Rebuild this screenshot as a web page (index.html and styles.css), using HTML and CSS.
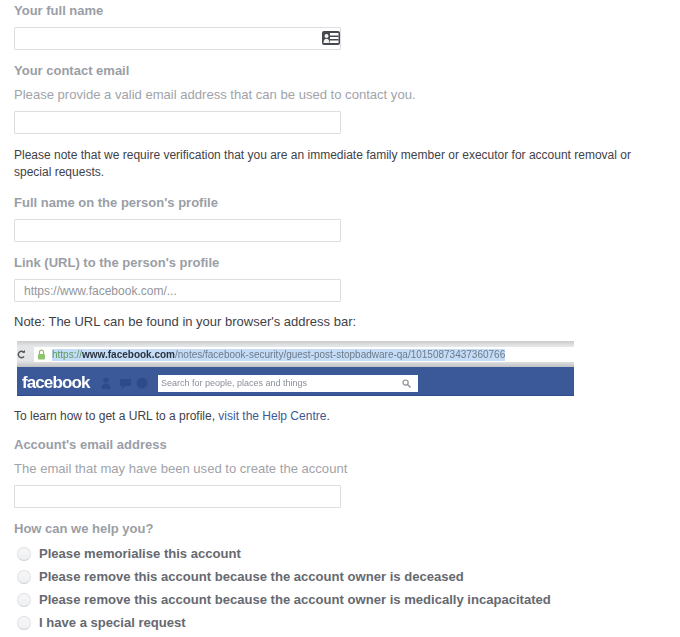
FILE: index.html
```html
<!doctype html>
<html>
<head>
  <meta charset="utf-8">
  <title>Memorialisation request</title>
  <link rel="stylesheet" href="styles.css">
</head>
<body>
  <form class="form">
    <div class="field name-field">
      <label class="label">Your full name</label>
      <div class="input">
        <svg class="card-icon" width="18" height="14" viewBox="0 0 18 14">
          <rect x="0" y="0" width="18" height="14" rx="2" fill="#45484e"/>
          <rect x="8" y="2" width="8.500" height="10" fill="#fff"/>
          <circle cx="4.500" cy="5" r="2" fill="#f2f2f2"/>
          <path d="M1.500 12c0-3 1.300-4.200 3-4.200s3 1.200 3 4.200z" fill="#f2f2f2"/>
          <path d="M8 4.400h8.500v1.500H8zM8 8h8.500v1.500H8z" fill="#45484e"/>
        </svg>
      </div>
    </div>

    <div class="field contact-field">
      <label class="label">Your contact email</label>
      <p class="hint">Please provide a valid email address that can be used to contact you.</p>
      <div class="input"></div>
    </div>

    <p class="notice">Please note that we require verification that you are an immediate family member or executor for account removal or special requests.</p>

    <div class="field profile-name-field">
      <label class="label">Full name on the person's profile</label>
      <div class="input"></div>
    </div>

    <div class="field link-field">
      <label class="label">Link (URL) to the person's profile</label>
      <div class="input">https://www.facebook.com/...</div>
    </div>

    <p class="url-note">Note: The URL can be found in your browser's address bar:</p>

    <div class="shot">
      <div class="shot-bar">
        <svg class="reload" width="8" height="9" viewBox="0 0 8 9">
          <path d="M7 2.500A3.200 3.200 0 1 0 7 6.500" fill="none" stroke="#555" stroke-width="1.400"/>
          <path d="M5 2.800h3V0z" fill="#555"/>
        </svg>
        <div class="address">
          <svg class="lock" width="9" height="11" viewBox="0 0 9 11">
            <path d="M2.500 5V3.200a2 2 0 0 1 4 0V5" fill="none" stroke="#8fb87a" stroke-width="1.200"/>
            <rect x="1" y="5" width="7" height="5.500" rx="1" fill="#8cc56e"/>
          </svg>
          <span class="url"><span class="url-scheme">https://</span><span class="url-host">www.facebook.com</span>/notes/facebook-security/guest-post-stopbadware-qa/10150873437360766</span>
        </div>
      </div>
      <div class="shot-nav">
        <span class="fb-logo">facebook</span>
        <svg class="fb-icons" width="48" height="14" viewBox="0 0 48 14">
          <circle cx="6" cy="4" r="2.600" fill="#2f4a8a"/>
          <path d="M1.500 13c0-4 1.800-5.500 4.500-5.500s4.500 1.500 4.500 5.500z" fill="#2f4a8a"/>
          <path d="M20 3h11v7h-6l-3 3v-3h-2z" fill="#2f4a8a"/>
          <circle cx="42" cy="7" r="5.500" fill="#2f4a8a"/>
        </svg>
        <div class="fb-search">
          <span>Search for people, places and things</span>
          <svg width="9" height="9" viewBox="0 0 9 9">
            <circle cx="3.600" cy="3.600" r="2.600" fill="none" stroke="#8a8f98" stroke-width="1.200"/>
            <path d="M5.500 5.500L8.500 8.500" stroke="#8a8f98" stroke-width="1.400"/>
          </svg>
        </div>
      </div>
    </div>

    <p class="help-note">To learn how to get a URL to a profile, <a class="link">visit the Help Centre</a>.</p>

    <div class="field account-field">
      <label class="label">Account's email address</label>
      <p class="hint">The email that may have been used to create the account</p>
      <div class="input"></div>
    </div>

    <div class="field help-field">
      <label class="label">How can we help you?</label>
      <ul class="options">
        <li class="option"><span class="radio"></span>Please memorialise this account</li>
        <li class="option"><span class="radio"></span>Please remove this account because the account owner is deceased</li>
        <li class="option"><span class="radio"></span>Please remove this account because the account owner is medically incapacitated</li>
        <li class="option"><span class="radio"></span>I have a special request</li>
      </ul>
    </div>
  </form>
</body>
</html>
```

FILE: styles.css
```css
* {
  margin: 0;
  padding: 0;
  box-sizing: border-box;
}
html, body {
  height: 637px;
  overflow: hidden;
}
body {
  background: #fff;
  font-family: "Liberation Sans", Arial, sans-serif;
  color: #4b4f56;
}
.form {
  padding: 3px 0 0 14px;
  width: 660px;
}
.label {
  display: block;
  font-size: 13px;
  line-height: 15px;
  font-weight: bold;
  color: #9a9ea6;
}
.hint {
  font-size: 13.07px;
  line-height: 16px;
  color: #a0a3a9;
  margin-top: 9px;
}
.input {
  width: 327px;
  height: 23px;
  margin-top: 9px;
  padding: 0 9px;
  display: flex;
  align-items: center;
  justify-content: flex-end;
  border: 1px solid #dcdee1;
  border-radius: 1px;
  background: #fff;
  font-size: 12px;
  color: #92959b;
}
.hint + .input {
  margin-top: 8px;
}
.link-field .input {
  justify-content: flex-start;
}
.card-icon {
  margin: -2px -9px 0 0;
}
.contact-field {
  margin-top: 13px;
}
.notice {
  margin-top: 13px;
  max-width: 630px;
  font-size: 12px;
  line-height: 17px;
  color: #3f4248;
}
.profile-name-field {
  margin-top: 14px;
}
.link-field {
  margin-top: 13px;
}
.url-note {
  margin-top: 12px;
  font-size: 13px;
  line-height: 15px;
  color: #3f4248;
}
.shot {
  width: 557px;
  height: 55px;
  margin: 12px 0 0 3px;
  display: flex;
  flex-direction: column;
  filter: blur(0.4px);
}
.shot-bar {
  height: 26px;
  display: flex;
  align-items: center;
  gap: 9px;
  padding: 6px 0 5px 0;
  background: linear-gradient(#c9cbcd 0, #e4e6e8 5px, #e2e4e6 20px, #bfc1c2 100%);
}
.reload {
  flex: none;
}
.address {
  flex: 1;
  height: 15px;
  display: flex;
  align-items: center;
  gap: 6px;
  padding-left: 3px;
  background: #fff;
}
.url {
  font-size: 10px;
  line-height: 12px;
  white-space: nowrap;
  color: #6d7a8a;
  background: #c4dcf5;
}
.url-scheme {
  color: #5c9a5e;
}
.url-host {
  color: #2a3340;
  font-weight: bold;
}
.shot-nav {
  flex: 1;
  display: flex;
  align-items: center;
  padding: 4px 0 0 5px;
  background: #3b5998;
  border-bottom: 1px solid #2f4b86;
}
.fb-logo {
  font-size: 17px;
  font-weight: bold;
  letter-spacing: -0.9px;
  color: #fff;
  width: 78px;
}
.fb-icons {
  flex: none;
}
.fb-search {
  width: 260px;
  height: 17px;
  margin-left: 10px;
  padding: 0 7px 0 3px;
  display: flex;
  align-items: center;
  justify-content: space-between;
  background: #fff;
  font-size: 9px;
  color: #8a8f98;
}
.help-note {
  margin-top: 13px;
  font-size: 12px;
  line-height: 15px;
  color: #3f4248;
}
.link {
  color: #3b5998;
}
.account-field {
  margin-top: 13px;
}
.help-field {
  margin-top: 13px;
}
.options {
  list-style: none;
  margin-top: 6px;
}
.option {
  height: 23px;
  display: flex;
  align-items: center;
  font-size: 13.07px;
  font-weight: bold;
  color: #666970;
}
.radio {
  width: 14px;
  height: 14px;
  margin: 0 8px 0 3px;
  border-radius: 50%;
  border: 1px solid #e0e1e4;
  border-bottom-color: #cfd1d5;
  background: linear-gradient(#f8f8f9, #eeeff1);
}
```
